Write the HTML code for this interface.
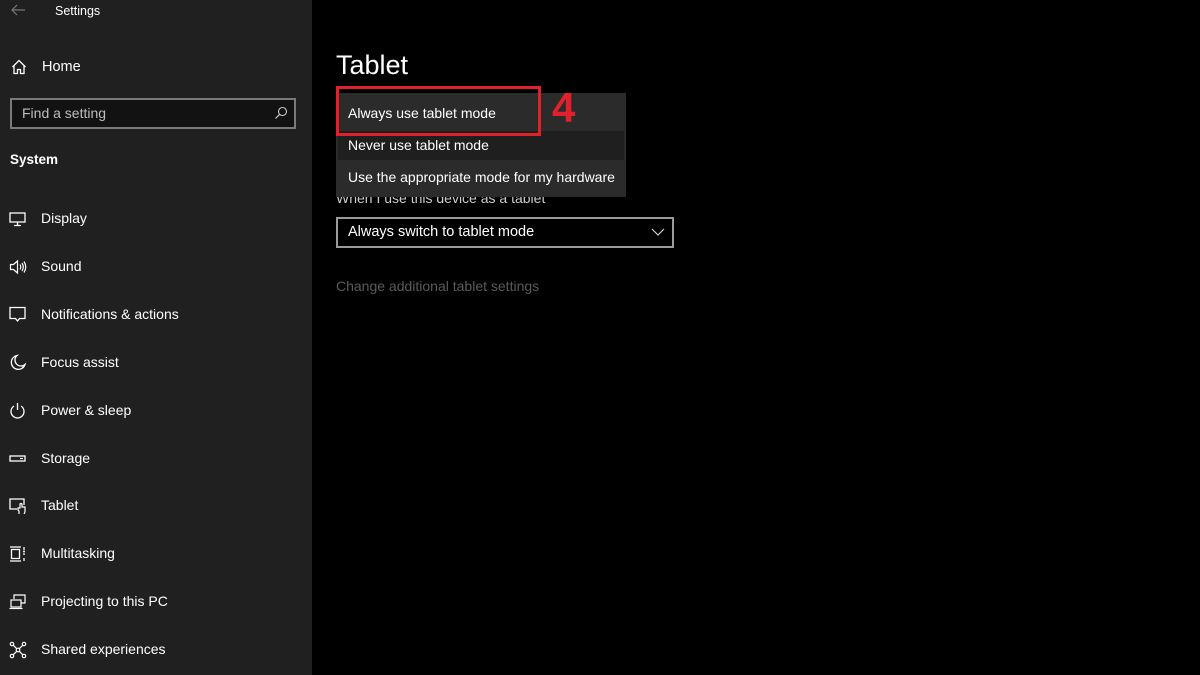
<!DOCTYPE html>
<html><head><meta charset="utf-8"><style>
*{margin:0;padding:0;box-sizing:border-box}
body{width:1200px;height:675px;overflow:hidden;background:#000;font-family:"Liberation Sans",sans-serif;color:#fff;position:relative}
.side{position:absolute;left:0;top:0;width:312px;height:675px;background:#202020}
.t{position:absolute;white-space:nowrap}
.nav{position:absolute;left:0;width:312px;height:48px}
.nav svg{position:absolute;left:9px;top:15px}
.nav span{position:absolute;left:41px;top:15px;font-size:14px;color:#fff}
</style></head><body>
<div class="side">
 <svg style="position:absolute;left:10px;top:3px" width="16" height="14" viewBox="0 0 16 14"><path d="M15 7H2M7 2L2 7l5 5" stroke="#777" fill="none" stroke-width="1.2"/></svg>
 <div class="t" style="left:55px;top:4px;font-size:12.5px">Settings</div>
 <svg style="position:absolute;left:11px;top:59px" width="16" height="16" viewBox="0 0 16 16"><path d="M1.5 8L8 1.5 14.5 8M3 6.5V14.5h3.5v-4h3v4H13V6.5" stroke="#fff" fill="none" stroke-width="1.3"/></svg>
 <div class="t" style="left:42px;top:59px;font-size:14.5px">Home</div>
 <div style="position:absolute;left:10px;top:98px;width:286px;height:31px;border:2px solid #7a7a7a;background:#121212"></div>
 <div class="t" style="left:22px;top:105px;font-size:14px;color:#bdbdbd">Find a setting</div>
 <svg style="position:absolute;left:274px;top:106px" width="14" height="14" viewBox="0 0 14 14"><circle cx="8.5" cy="5.5" r="4" stroke="#ccc" fill="none" stroke-width="1.1"/><path d="M5.6 8.4L1.5 12.5" stroke="#ccc" stroke-width="1.2"/></svg>
 <div class="t" style="left:10px;top:152px;font-size:13.5px;font-weight:bold">System</div>

 <div class="nav" style="top:195px"><svg width="18" height="18" viewBox="0 0 18 18"><rect x="1" y="3" width="15" height="9" stroke="#fff" fill="none" stroke-width="1.3"/><path d="M8.5 12v3M5 15.5h7" stroke="#fff" stroke-width="1.3"/></svg><span style="top:15px">Display</span></div>
 <div class="nav" style="top:243px"><svg width="18" height="18" viewBox="0 0 18 18"><path d="M1.5 6.5h3l4-3.5v12l-4-3.5h-3z" stroke="#fff" fill="none" stroke-width="1.2"/><path d="M11 6.5q1.5 2.5 0 5M13 5q2.5 4 0 8M15 3.5q3.5 5.5 0 11" stroke="#fff" fill="none" stroke-width="1.2"/></svg><span>Sound</span></div>
 <div class="nav" style="top:291px"><svg width="18" height="18" viewBox="0 0 18 18"><path d="M1 1.5h15v11h-5.5l-2 2.5-2-2.5H1z" stroke="#fff" fill="none" stroke-width="1.3"/></svg><span>Notifications &amp; actions</span></div>
 <div class="nav" style="top:339px"><svg width="18" height="18" viewBox="0 0 18 18"><path d="M8 1.5a7 7 0 1 0 8 9A6 6 0 0 1 8 1.5z" stroke="#fff" fill="none" stroke-width="1.3"/></svg><span>Focus assist</span></div>
 <div class="nav" style="top:387px"><svg width="18" height="18" viewBox="0 0 18 18"><path d="M5 4a6.5 6.5 0 1 0 7 0M8.5 1v7" stroke="#fff" fill="none" stroke-width="1.3"/></svg><span>Power &amp; sleep</span></div>
 <div class="nav" style="top:435px"><svg width="18" height="18" viewBox="0 0 18 18"><rect x="1" y="6" width="15" height="5" stroke="#fff" fill="none" stroke-width="1.3"/><path d="M11 8.5h3" stroke="#fff" stroke-width="1.2"/></svg><span>Storage</span></div>
 <div class="nav" style="top:482px"><svg width="18" height="18" viewBox="0 0 18 18"><path d="M8 12H1V2h14v6" stroke="#fff" fill="none" stroke-width="1.3"/><path d="M10 17v-3l-1-1v-2h2V7.5a1 1 0 0 1 2 0V10h3v5l-1 2" stroke="#fff" fill="none" stroke-width="1.2"/></svg><span>Tablet</span></div>
 <div class="nav" style="top:530px"><svg width="18" height="18" viewBox="0 0 18 18"><path d="M1 2h11M1 16h11M2.5 4.5h8v9h-8z M15 2v3M15 8v2M15 13v3" stroke="#fff" fill="none" stroke-width="1.3"/><circle cx="15" cy="6.5" r="1" fill="#fff"/></svg><span>Multitasking</span></div>
 <div class="nav" style="top:578px"><svg width="18" height="18" viewBox="0 0 18 18"><path d="M5 6V2h11v8h-4" stroke="#fff" fill="none" stroke-width="1.2"/><rect x="2" y="7" width="10" height="7" stroke="#fff" fill="none" stroke-width="1.2"/><path d="M0.5 15.5h13" stroke="#fff" stroke-width="1.2"/></svg><span>Projecting to this PC</span></div>
 <div class="nav" style="top:626px"><svg width="18" height="18" viewBox="0 0 18 18"><g stroke="#fff" fill="none" stroke-width="1.2"><circle cx="3" cy="3" r="1.7"/><circle cx="15" cy="3" r="1.7"/><circle cx="3" cy="15" r="1.7"/><circle cx="15" cy="15" r="1.7"/><circle cx="9" cy="9" r="1.8"/><path d="M4.3 4.3l3.3 3.3M13.7 4.3l-3.3 3.3M4.3 13.7l3.3-3.3M13.7 13.7l-3.3-3.3"/></g></svg><span>Shared experiences</span></div>
</div>

<div class="t" style="left:336px;top:50px;font-size:27px">Tablet</div>
<div class="t" style="left:336px;top:190px;font-size:14px;color:#ccc">When I use this device as a tablet</div>

<div style="position:absolute;left:336px;top:93px;width:290px;height:104px;background:#2b2b2b"></div>
<div style="position:absolute;left:338px;top:131px;width:286px;height:29px;background:#1f1f1f"></div>
<div class="t" style="left:348px;top:105px;font-size:14px">Always use tablet mode</div>
<div class="t" style="left:348px;top:137px;font-size:14px">Never use tablet mode</div>
<div class="t" style="left:348px;top:169px;font-size:14px">Use the appropriate mode for my hardware</div>
<div style="position:absolute;left:336px;top:86px;width:205px;height:50px;border:3px solid #e0212b"></div>
<div class="t" style="left:552px;top:84px;font-size:42px;font-weight:bold;color:#e0212b">4</div>

<div style="position:absolute;left:336px;top:217px;width:338px;height:31px;border:2px solid #9a9a9a;background:#000"></div>
<div class="t" style="left:348px;top:224px;font-size:14.5px">Always switch to tablet mode</div>
<svg style="position:absolute;left:651px;top:227px" width="14" height="10" viewBox="0 0 14 10"><path d="M1 2l6 6 6-6" stroke="#ccc" fill="none" stroke-width="1.2"/></svg>
<div class="t" style="left:336px;top:278px;font-size:14px;color:#5a5a5a">Change additional tablet settings</div>
</body></html>
